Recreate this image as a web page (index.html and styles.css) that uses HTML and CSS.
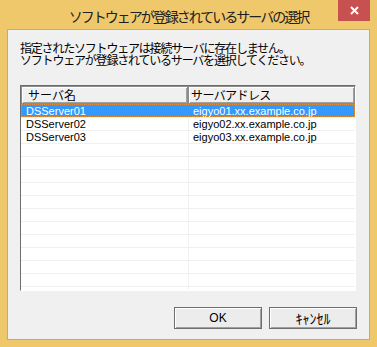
FILE: index.html
```html
<!DOCTYPE html>
<html lang="ja">
<head>
    <meta charset="UTF-8">
    <title>ソフトウェアが登録されているサーバの選択</title>
    <link rel="stylesheet" href="styles.css">
</head>
<body>
    <div class="window">
        <div class="titlebar">
            <span></span>
            <div class="title">ソフトウェアが登録されているサーバの選択</div>
            <button class="close" title="閉じる">
                <svg width="9" height="9" viewBox="0 0 9 9"><path d="M1 1 L8 8 M8 1 L1 8" stroke="#fff" stroke-width="2" fill="none"/></svg>
            </button>
        </div>
        <div class="client">
            <p class="message">指定されたソフトウェアは接続サーバに存在しません。<br>ソフトウェアが登録されているサーバを選択してください。</p>
            <div class="listview">
                <div class="lv-header">
                    <div class="lv-col first">サーバ名</div>
                    <div class="lv-col">サーバアドレス</div>
                </div>
                <div class="lv-body">
                    <div class="lv-row selected"><div class="lv-cell">DSServer01</div><div class="lv-cell">eigyo01.xx.example.co.jp</div></div>
                    <div class="lv-row"><div class="lv-cell">DSServer02</div><div class="lv-cell">eigyo02.xx.example.co.jp</div></div>
                    <div class="lv-row"><div class="lv-cell">DSServer03</div><div class="lv-cell">eigyo03.xx.example.co.jp</div></div>
                    <div class="lv-row"><div class="lv-cell"></div><div class="lv-cell"></div></div>
                    <div class="lv-row"><div class="lv-cell"></div><div class="lv-cell"></div></div>
                    <div class="lv-row"><div class="lv-cell"></div><div class="lv-cell"></div></div>
                    <div class="lv-row"><div class="lv-cell"></div><div class="lv-cell"></div></div>
                    <div class="lv-row"><div class="lv-cell"></div><div class="lv-cell"></div></div>
                    <div class="lv-row"><div class="lv-cell"></div><div class="lv-cell"></div></div>
                    <div class="lv-row"><div class="lv-cell"></div><div class="lv-cell"></div></div>
                    <div class="lv-row"><div class="lv-cell"></div><div class="lv-cell"></div></div>
                    <div class="lv-row"><div class="lv-cell"></div><div class="lv-cell"></div></div>
                    <div class="lv-row"><div class="lv-cell"></div><div class="lv-cell"></div></div>
                    <div class="lv-row"><div class="lv-cell"></div><div class="lv-cell"></div></div>
                    <div class="lv-row"><div class="lv-cell"></div><div class="lv-cell"></div></div>
                </div>
            </div>
            <div class="buttons">
                <button class="btn">OK</button>
                <button class="btn">ｷｬﾝｾﾙ</button>
            </div>
        </div>
    </div>
</body>
</html>
```

FILE: styles.css
```css
body {
    margin: 0;
    padding: 0;
    font-family: "Noto Sans CJK JP", sans-serif;
    color: #000;
}
.window {
    width: 377px;
    height: 347px;
    box-sizing: border-box;
    background-color: #efc86c;
    padding: 0 7px 7px 7px;
    display: flex;
    flex-direction: column;
}
.titlebar {
    height: 29px;
    display: grid;
    grid-template-columns: 32px 1fr 32px;
    align-items: start;
}
.title {
    text-align: center;
    font-size: 14px;
    letter-spacing: -2px;
    line-height: 16px;
    padding-top: 8px;
    color: #202020;
}
.close {
    width: 32px;
    height: 21px;
    border: none;
    padding: 0;
    margin: 0;
    background-color: #c75050;
    display: flex;
    align-items: center;
    justify-content: center;
}
.client {
    flex: 1;
    border: 1px solid #d2ab58;
    background-color: #f0f0f0;
    padding: 12px 12px 10px 12px;
    display: flex;
    flex-direction: column;
}
.message {
    margin: 0;
    font-size: 12px;
    line-height: 12px;
    letter-spacing: -1.2px;
}
.listview {
    margin-top: 19px;
    width: 336px;
    height: 206px;
    box-sizing: border-box;
    border-top: 1px solid #6d6d6d;
    border-left: 1px solid #6d6d6d;
    border-right: 1px solid #fff;
    border-bottom: 1px solid #fff;
    background-color: #fff;
    overflow: hidden;
}
.lv-header {
    display: grid;
    grid-template-columns: 167px 167px;
    height: 18px;
}
.lv-col {
    box-sizing: border-box;
    height: 18px;
    background-color: #f0f0f0;
    border: 1px solid #8c8c8c;
    box-shadow: inset 1px 1px #fff, inset -1px -1px #a0a0a0;
    font-size: 12px;
    line-height: 16px;
    padding-left: 2px;
    letter-spacing: -0.6px;
    white-space: nowrap;
}
.lv-col.first {
    padding-left: 6px;
    letter-spacing: 0;
}
.lv-row {
    display: grid;
    grid-template-columns: 167px 167px;
    height: 13px;
    box-sizing: border-box;
    border-top: 1px solid #f0f0f0;
}
.lv-cell {
    font-family: "Liberation Sans", Arial, sans-serif;
    font-size: 11px;
    line-height: 12px;
    padding-left: 5px;
    white-space: nowrap;
}
.lv-cell + .lv-cell {
    border-left: 1px solid #f0f0f0;
    padding-left: 4px;
}
.lv-row.selected {
    background-color: #3399ff;
    border-top-color: #3399ff;
    color: #fff;
    outline: 1px dotted #e0903a;
    outline-offset: -1px;
}
.lv-row.selected .lv-cell + .lv-cell {
    border-left-color: #3399ff;
}
.buttons {
    margin-top: auto;
    display: flex;
    justify-content: flex-end;
    gap: 7px;
}
.btn {
    width: 88px;
    height: 22px;
    box-sizing: border-box;
    margin: 0;
    padding: 0;
    background-color: #ececec;
    border: 1px solid #6e6e6e;
    box-shadow: inset 1px 1px #fff, inset -1px -1px #a0a0a0;
    font-family: "Liberation Sans", "Noto Sans CJK JP", sans-serif;
    font-size: 12px;
    color: #000;
}
.btn + .btn {
    font-family: "Noto Sans CJK JP", sans-serif;
    font-size: 14px;
}
```
